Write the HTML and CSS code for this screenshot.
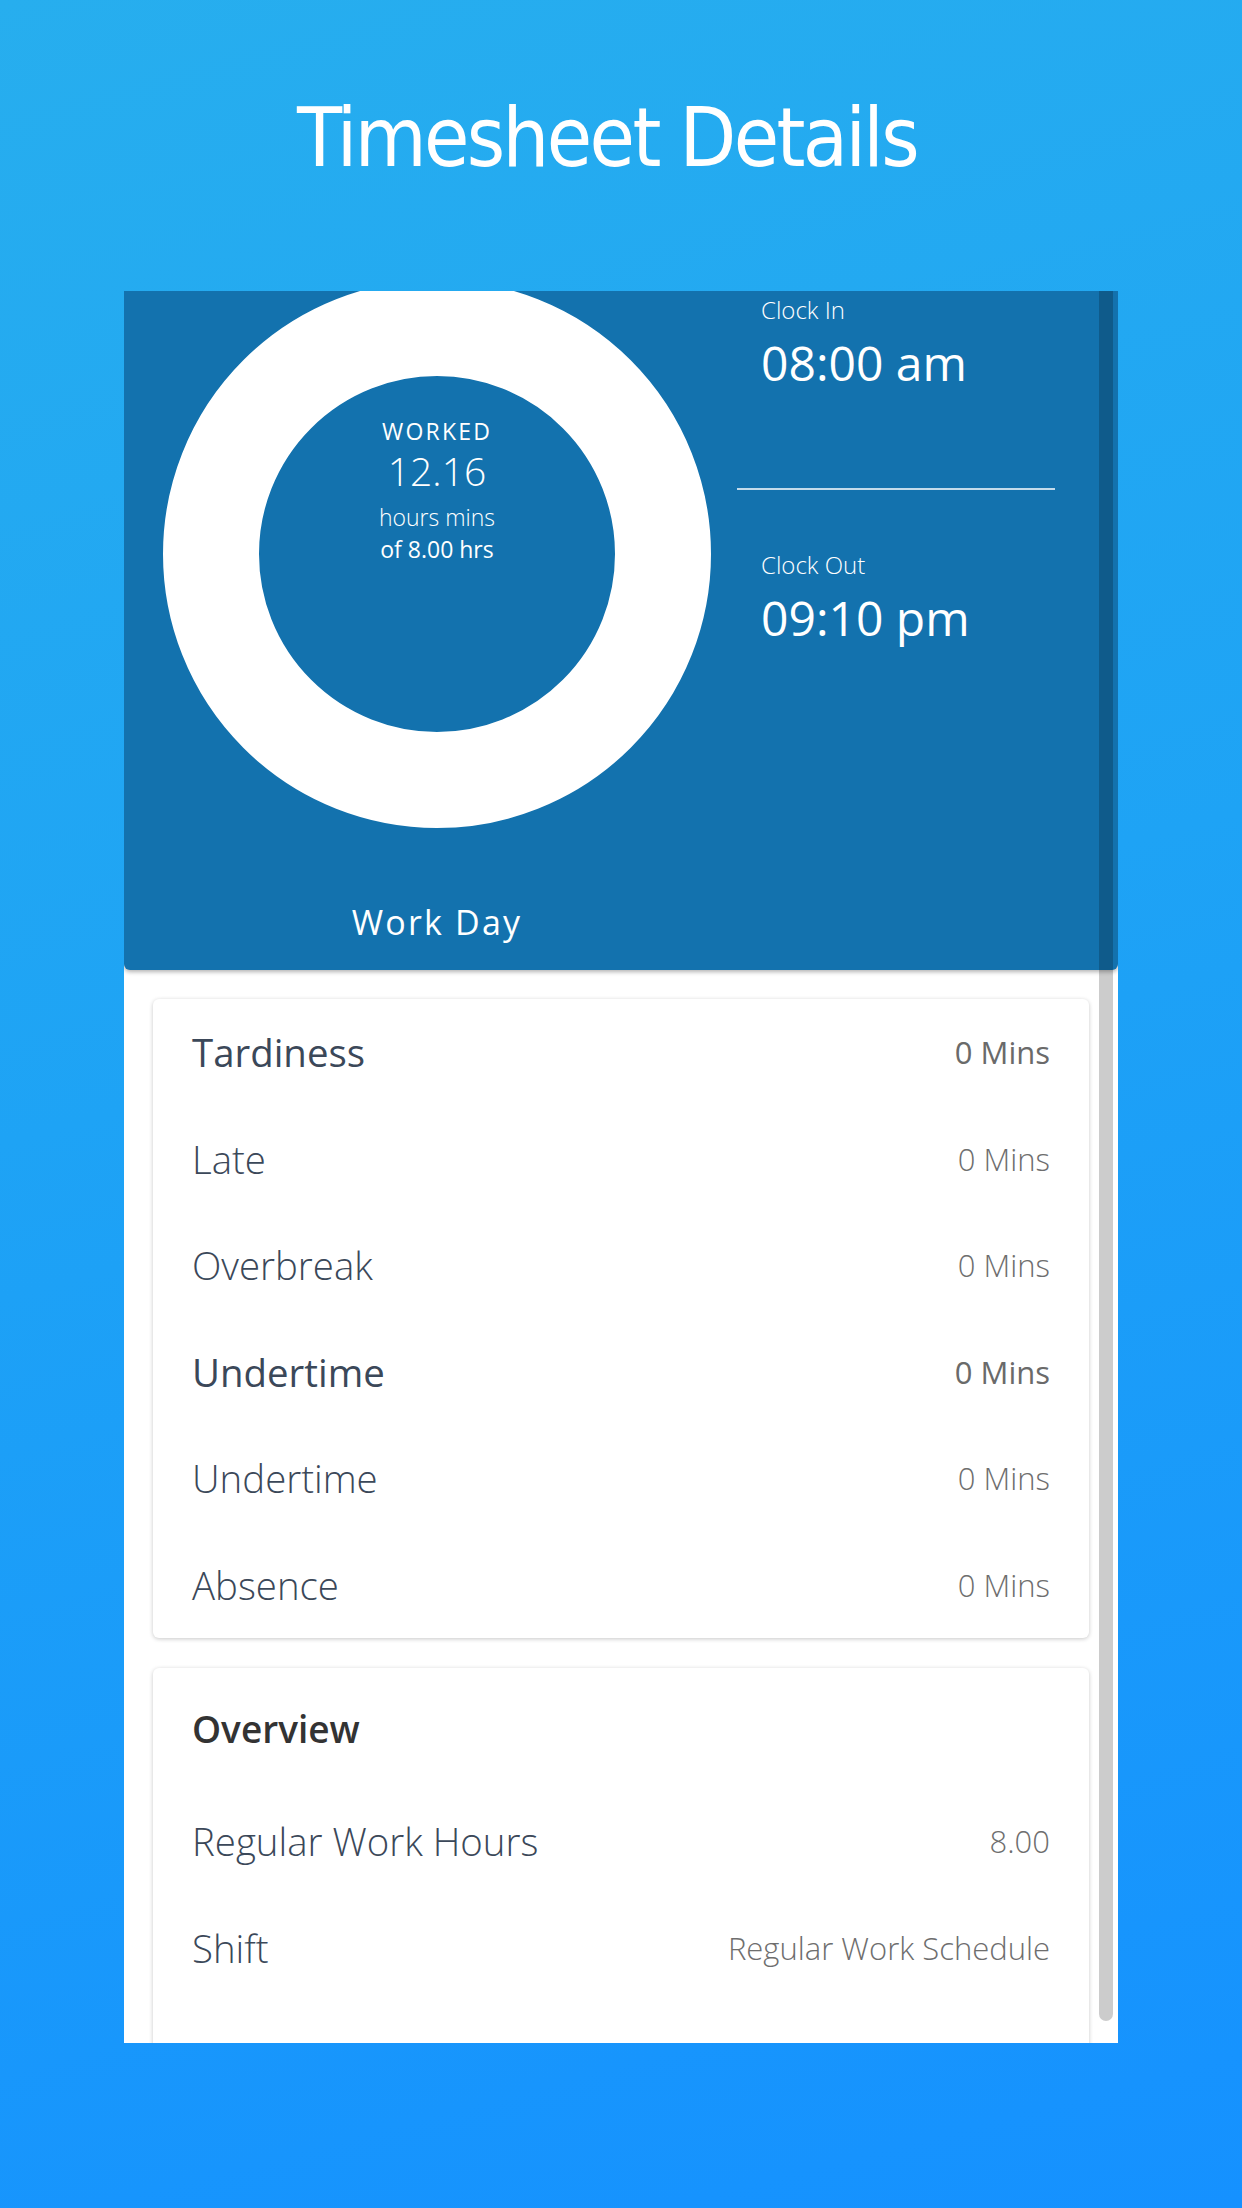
FILE: index.html
```html
<!DOCTYPE html>
<html lang="en">
<head>
<meta charset="utf-8">
<title>Timesheet Details</title>
<link rel="stylesheet" href="styles.css">
</head>
<body>
  <h1 class="title">Timesheet Details</h1>
  <div class="screen">
    <div class="scrollbar"></div>
    <section class="summary">
      <div class="summary-left">
        <div class="donut">
          <div class="donut-label">WORKED</div>
          <div class="donut-value">12.16</div>
          <div class="donut-unit">hours mins</div>
          <div class="donut-of">of 8.00 hrs</div>
        </div>
        <div class="day-type">Work Day</div>
      </div>
      <div class="summary-right">
        <div class="clock-label">Clock In</div>
        <div class="clock-value">08:00 am</div>
        <div class="divider"></div>
        <div class="clock-label">Clock Out</div>
        <div class="clock-value">09:10 pm</div>
      </div>
    </section>
    <div class="cards">
      <div class="card">
        <div class="row row-head"><span class="label">Tardiness</span><span class="value">0 Mins</span></div>
        <div class="row"><span class="label">Late</span><span class="value">0 Mins</span></div>
        <div class="row"><span class="label">Overbreak</span><span class="value">0 Mins</span></div>
        <div class="row row-head"><span class="label">Undertime</span><span class="value">0 Mins</span></div>
        <div class="row"><span class="label">Undertime</span><span class="value">0 Mins</span></div>
        <div class="row"><span class="label">Absence</span><span class="value">0 Mins</span></div>
      </div>
      <div class="card card-overview">
        <div class="card-title">Overview</div>
        <div class="row"><span class="label">Regular Work Hours</span><span class="value">8.00</span></div>
        <div class="row"><span class="label">Shift</span><span class="value">Regular Work Schedule</span></div>
      </div>
    </div>
  </div>
</body>
</html>
```
FILE: styles.css
```css
html, body {
  margin: 0;
  padding: 0;
}
body {
  width: 1242px;
  height: 2208px;
  overflow: hidden;
  background: linear-gradient(165deg, #27aeee 0%, #1ea3f5 45%, #1591ff 100%);
  font-family: "Open Sans", "Noto Sans", sans-serif;
}
.title {
  margin: 0;
  height: 291px;
  box-sizing: border-box;
  padding: 97px 28px 0 0;
  text-align: center;
  font-family: "DejaVu Sans Condensed", "DejaVu Sans", sans-serif;
  font-weight: normal;
  font-size: 82px;
  line-height: 1;
  letter-spacing: -2.6px;
  color: #ffffff;
}
.screen {
  position: relative;
  margin-left: 124px;
  width: 994px;
  height: 1752px;
  background: #ffffff;
  overflow: hidden;
}
.scrollbar {
  position: absolute;
  z-index: 5;
  top: 0;
  right: 5px;
  width: 14px;
  height: 1730px;
  border-radius: 0 0 7px 7px;
  background: rgba(0, 0, 0, 0.2);
}
.summary {
  position: relative;
  z-index: 2;
  display: flex;
  height: 679px;
  background: #1372ae;
  border-radius: 0 0 6px 6px;
  box-shadow: 0 2px 4px rgba(0, 0, 0, 0.3);
  overflow: hidden;
  color: #ffffff;
}
.summary-left {
  width: 613px;
  box-sizing: border-box;
  padding-left: 13px;
  display: flex;
  flex-direction: column;
  align-items: center;
}
.donut {
  width: 548px;
  height: 548px;
  flex: none;
  margin-top: -11px;
  box-sizing: border-box;
  border: 96px solid #ffffff;
  border-radius: 50%;
  display: flex;
  flex-direction: column;
  align-items: center;
  padding-top: 44px;
  line-height: 1;
}
.donut-label {
  font-size: 23px;
  font-weight: 400;
  letter-spacing: 2.2px;
}
.donut-value {
  margin-top: 8px;
  font-size: 39px;
  font-weight: 300;
}
.donut-unit {
  margin-top: 16px;
  font-size: 23px;
  font-weight: 300;
}
.donut-of {
  margin-top: 9px;
  font-size: 23px;
  font-weight: 400;
}
.day-type {
  margin-top: 77px;
  font-size: 34px;
  line-height: 1;
  letter-spacing: 2.2px;
}
.summary-right {
  width: 318px;
  padding-top: 7px;
  display: flex;
  flex-direction: column;
  line-height: 1;
}
.clock-label {
  padding-left: 24px;
  font-size: 24px;
  font-weight: 300;
}
.clock-value {
  padding-left: 24px;
  margin-top: 17px;
  font-size: 48px;
  font-weight: 400;
}
.divider {
  margin: 101px 0 63px;
  height: 2px;
  background: rgba(255, 255, 255, 0.75);
}
.cards {
  padding: 29px;
  display: flex;
  flex-direction: column;
  gap: 30px;
}
.card {
  background: #ffffff;
  border-radius: 6px;
  box-shadow: 0 1px 4px rgba(0, 0, 0, 0.22);
  padding: 0 39px;
}
.card-overview {
  min-height: 420px;
}
.row {
  height: 106.5px;
  display: flex;
  align-items: center;
  justify-content: space-between;
}
.label {
  font-size: 38.4px;
  font-weight: 300;
  color: #3b4859;
}
.value {
  font-size: 31px;
  font-weight: 300;
  color: #6e6e6e;
}
.row-head .label {
  font-weight: 400;
}
.row-head .value {
  font-weight: 400;
  color: #6a6a6a;
}
.card-title {
  height: 120px;
  display: flex;
  align-items: center;
  font-size: 37px;
  font-weight: 600;
  color: #333333;
}
```
